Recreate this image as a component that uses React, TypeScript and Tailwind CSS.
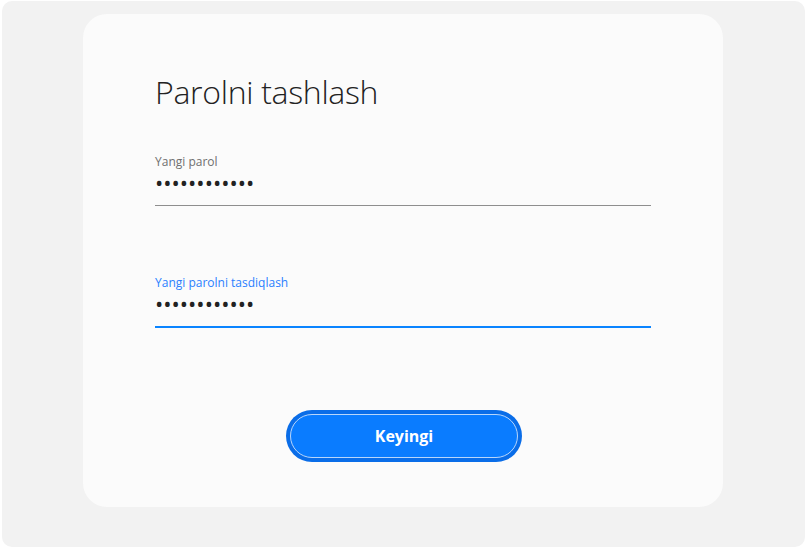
import { useState } from "react";

export default function App() {
  const [pass1, setPass1] = useState("abcdefghijkl");
  const [pass2, setPass2] = useState("abcdefghijkl");

  return (
    <div className="w-[807px] h-[550px] bg-white pt-px pl-[2px]" style={{ fontFamily: "'Open Sans', 'Noto Sans', sans-serif" }}>
      <div className="w-[803px] h-[546px] rounded-[10px] bg-[#f2f2f2] pt-[13px] pl-[81px]">
        {/* Card */}
        <div className="w-[640px] h-[493px] rounded-[24px] bg-[#fbfbfb] px-[72px] pt-[58px] flex flex-col">
          <h1 className="text-[32px] leading-[40px] font-light text-[#222] tracking-[-0.3px]">Parolni tashlash</h1>

          {/* Field 1 */}
          <div className="mt-[42px] flex flex-col border-b border-[#8e8e8e] pb-[11px]">
            <label className="text-[12px] leading-[16px] text-[#6f6f6f]">Yangi parol</label>
            <input
              type="password"
              value={pass1}
              onChange={(e) => setPass1(e.target.value)}
              className="h-[24px] bg-transparent text-[22px] text-[#222] outline-none tracking-[0px]"
            />
          </div>

          {/* Field 2 */}
          <div className="mt-[69px] flex flex-col border-b-2 border-[#0a84ff] pb-[11px]">
            <label className="text-[12px] leading-[16px] text-[#2a7fff]">Yangi parolni tasdiqlash</label>
            <input
              type="password"
              value={pass2}
              onChange={(e) => setPass2(e.target.value)}
              className="h-[24px] bg-transparent text-[22px] text-[#222] outline-none tracking-[0px]"
            />
          </div>

          {/* Button */}
          <div className="mt-[82px] flex justify-center">
            <button className="w-[236px] h-[52px] rounded-full bg-[#0a6de8] p-[4px] ml-[2px]">
              <span className="flex h-full w-full items-center justify-center rounded-full bg-[#0a7cff] border border-[#b8d6fb] text-[16px] font-bold text-white">
                Keyingi
              </span>
            </button>
          </div>
        </div>
      </div>
    </div>
  );
}
